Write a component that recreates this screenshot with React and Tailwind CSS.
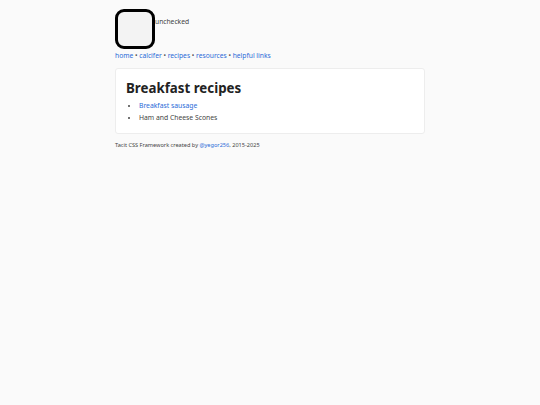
export default function App() {
  return (
    <div className="min-h-[405px] bg-[#fafafa] text-[#444]">
      <div className="mx-auto w-[310px] pt-[9px] font-['Noto_Sans',sans-serif]">
        <div className="flex items-start">
          <div className="w-[40px] h-[40px] rounded-[9px] border-[3.5px] border-black bg-[#f3f3f3] shrink-0" />
          <span className="text-[6.7px] leading-[10px] mt-[8px] text-[#444]">unchecked</span>
        </div>
        <nav className="mt-[2px] text-[6.7px] leading-[10px]">
          <a className="text-[#2a6bd8]">home</a>
          <span className="text-[#555]"> • </span>
          <a className="text-[#2a6bd8]">calcifer</a>
          <span className="text-[#555]"> • </span>
          <a className="text-[#2a6bd8]">recipes</a>
          <span className="text-[#555]"> • </span>
          <a className="text-[#2a6bd8]">resources</a>
          <span className="text-[#555]"> • </span>
          <a className="text-[#2a6bd8]">helpful links</a>
        </nav>
        <section className="mt-[7px] bg-white border border-[#ededed] rounded-[3px] h-[66px] px-[10px] pt-[10px]">
          <h1 className="text-[13.3px] leading-[18px] font-bold text-[#222]">Breakfast recipes</h1>
          <ul className="list-disc pl-[13px] text-[6.8px] leading-[12px] mt-[3px] text-[#444]">
            <li><a className="text-[#2a6bd8]">Breakfast sausage</a></li>
            <li>Ham and Cheese Scones</li>
          </ul>
        </section>
        <footer className="mt-[7px] text-[5.6px] leading-[8px] text-[#444]">
          Tacit CSS Framework created by <a className="text-[#2a6bd8]">@yegor256</a>, 2015-2025
        </footer>
      </div>
    </div>
  );
}
